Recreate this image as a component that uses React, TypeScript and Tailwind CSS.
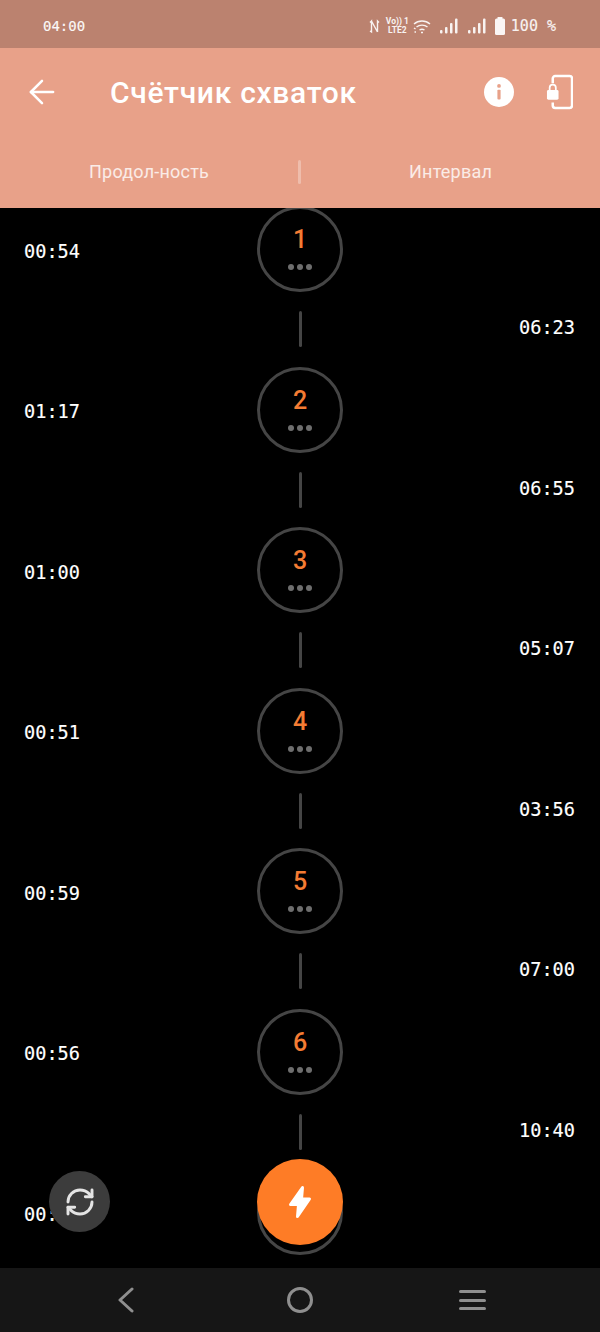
import React from "react";
import { ArrowLeft, RefreshCw } from "lucide-react";

const rows = [
  { id: 1, duration: "00:54", interval: "06:23" },
  { id: 2, duration: "01:17", interval: "06:55" },
  { id: 3, duration: "01:00", interval: "05:07" },
  { id: 4, duration: "00:51", interval: "03:56" },
  { id: 5, duration: "00:59", interval: "07:00" },
  { id: 6, duration: "00:56", interval: "10:40" },
  { id: 7, duration: "00:58", interval: "" },
];

const mono = "font-['DejaVu_Sans_Mono',monospace] [-webkit-text-stroke:0.15px_currentColor]";

const SignalBars = () => (
  <svg width="18" height="17" viewBox="0 0 18 17" fill="white" fillOpacity="0.9">
    <rect x="0" y="12" width="2.500" height="3.500" rx="1" />
    <rect x="5" y="9" width="2.500" height="6.500" rx="1" />
    <rect x="10" y="5" width="2.500" height="10.500" rx="1" />
    <rect x="15" y="0.500" width="2.500" height="15" rx="1" />
  </svg>
);

const StatusBar = () => (
  <div className="flex h-[48px] shrink-0 items-center justify-between bg-[#bb826f] pl-[43px] pr-[44px] pt-[4px] text-white">
    <span className={`${mono} text-[14px] leading-none opacity-95`}>04:00</span>
    <div className="flex items-center">
      <svg width="11" height="15" viewBox="0 0 11 15" fill="none" stroke="white" strokeOpacity="0.9" strokeWidth="1.400" className="mr-[7px]">
        <path d="M1 3.500 2.500 2v11L1 12M2.500 2l6 11M8.500 13V2L10 3.500" />
      </svg>
      <div className="mr-[5px] flex w-[21px] flex-col items-center whitespace-nowrap font-['Roboto',sans-serif] text-[8.500px] font-bold leading-[9px] opacity-90">
        <span>Vo)) 1</span>
        <span>LTE2</span>
      </div>
      <svg width="18" height="15" viewBox="0 0 18 15" fill="none" stroke="white" strokeOpacity="0.9" strokeWidth="1.400" className="mr-[9px]">
        <path d="M1 5c4.500-4 11.500-4 16 0" />
        <path d="M3.500 8c3-2.500 8-2.500 11 0" />
        <path d="M6.500 11c1.500-1 3.500-1 5 0" />
        <path d="M1 9l1.500 1M1.500 13h1.500M8 13.500h2" />
      </svg>
      <div className="mr-[10px]">
        <SignalBars />
      </div>
      <div className="mr-[9px]">
        <SignalBars />
      </div>
      <svg width="10" height="18" viewBox="0 0 10 18" fill="white" fillOpacity="0.92" className="mr-[6px]">
        <rect x="2.500" y="0" width="5" height="2" rx="0.500" />
        <rect x="0" y="1.500" width="10" height="16.500" rx="1.500" />
      </svg>
      <span className={`${mono} text-[15px] leading-none opacity-90`}>100 %</span>
    </div>
  </div>
);

const Header = () => (
  <div className="h-[160px] shrink-0 bg-[#e8a189] text-white">
    <div className="flex h-[87px] items-center pl-[23px] pr-[27px]">
      <ArrowLeft size={38} strokeWidth={1.600} className="shrink-0" />
      <h1 className="ml-[49px] flex-1 pt-[3px] font-['Roboto',sans-serif] text-[30px] font-medium leading-none tracking-[0.7px]">
        Счётчик схваток
      </h1>
      <svg width="30" height="30" viewBox="0 0 32 32" className="mr-[32px] shrink-0">
        <circle cx="16" cy="16" r="16" fill="white" />
        <circle cx="16" cy="9.500" r="2" fill="#e8a189" />
        <rect x="14.300" y="13.500" width="3.400" height="10.500" rx="1" fill="#e8a189" />
      </svg>
      <svg width="27" height="36" viewBox="0 0 28 36" fill="none" className="shrink-0">
        <path d="M7 9V4a2.500 2.500 0 0 1 2.500-2.500h15A2.500 2.500 0 0 1 27 4v28a2.500 2.500 0 0 1-2.500 2.500h-15A2.500 2.500 0 0 1 7 32v-3" stroke="white" strokeWidth="2.600" />
        <rect x="1" y="16" width="12" height="10" rx="1.500" fill="white" />
        <path d="M3.800 16v-2.500a3.200 3.200 0 0 1 6.400 0V16" stroke="white" strokeWidth="1.800" />
      </svg>
    </div>
    <div className="flex h-[73px] items-start pt-[24px] font-['Roboto',sans-serif] text-[18px] leading-[21px] text-white/80">
      <span className="w-[298px] pl-[89px] pt-[2px] tracking-[0.22px]">Продол-ность</span>
      <div className="mt-[1px] h-[24px] w-[3px] rounded-full bg-white/30" />
      <span className="flex-1 pl-[108px] pt-[2px] tracking-[0.22px]">Интервал</span>
    </div>
  </div>
);

const Row = ({ id, duration, interval }: { id: number; duration: string; interval: string }) => (
  <div className="shrink-0">
    <div className="grid h-[86px] grid-cols-[257px_86px_257px] items-center">
      <span className={`${mono} pl-[24px] pt-[6px] text-[18.600px] leading-none text-white`}>{duration}</span>
      <div className="flex h-[86px] w-[86px] flex-col items-center rounded-full border-[3px] border-[#454545] pt-[16px]">
        <span className="font-['Roboto',sans-serif] text-[25px] font-medium leading-[29px] text-[#f47c33]">{id}</span>
        <div className="mt-[10px] flex gap-[3px]">
          <span className="h-[6px] w-[6px] rounded-full bg-[#6e6e6e]" />
          <span className="h-[6px] w-[6px] rounded-full bg-[#6e6e6e]" />
          <span className="h-[6px] w-[6px] rounded-full bg-[#6e6e6e]" />
        </div>
      </div>
    </div>
    <div className="grid h-[74.500px] grid-cols-[257px_86px_257px] items-center">
      <div />
      <div className="mx-auto h-[36px] w-[3px] rounded-full bg-[#454545]" />
      <span className={`${mono} -mt-[1px] pr-[25px] text-right text-[18.600px] leading-none text-white`}>{interval}</span>
    </div>
  </div>
);

const NavBar = () => (
  <div className="grid h-[64px] shrink-0 grid-cols-[252px_96px_252px] items-center bg-[#161616] text-[#8f8f8f]">
    <div className="flex justify-center">
      <svg width="18" height="26" viewBox="0 0 18 26" fill="none" stroke="currentColor" strokeWidth="3" strokeLinecap="round" strokeLinejoin="round">
        <path d="M15 2 3 13l12 11" />
      </svg>
    </div>
    <div className="flex justify-center">
      <div className="h-[26px] w-[26px] rounded-full border-[3px] border-current" />
    </div>
    <div className="flex flex-col items-center gap-[5.700px] pr-[3px]">
      <div className="h-[3px] w-[27px] rounded-full bg-current" />
      <div className="h-[3px] w-[27px] rounded-full bg-current" />
      <div className="h-[3px] w-[27px] rounded-full bg-current" />
    </div>
  </div>
);

export default function App() {
  return (
    <div className="flex h-[1332px] w-[600px] flex-col overflow-hidden bg-black">
      <StatusBar />
      <Header />
      <main className="relative flex-1 overflow-hidden">
        <div className="-mt-[2px] flex flex-col">
          {rows.map((r) => (
            <Row key={r.id} {...r} />
          ))}
        </div>
        <button className="absolute left-[49px] top-[963px] flex h-[61px] w-[61px] items-center justify-center rounded-full bg-[#3c3c3c] text-[#e4e4e4]">
          <RefreshCw size={32} strokeWidth={2.200} />
        </button>
        <button className="absolute left-[257px] top-[951px] flex h-[86px] w-[86px] items-center justify-center rounded-full bg-[#fe7c26] text-white">
          <svg width="24" height="34" viewBox="0 0 24 34" fill="white" stroke="white" strokeWidth="3" strokeLinejoin="round">
            <path d="M14.500 2.500 2.500 19.500h8L9.500 31.500 21.500 14h-8z" />
          </svg>
        </button>
      </main>
      <NavBar />
    </div>
  );
}
